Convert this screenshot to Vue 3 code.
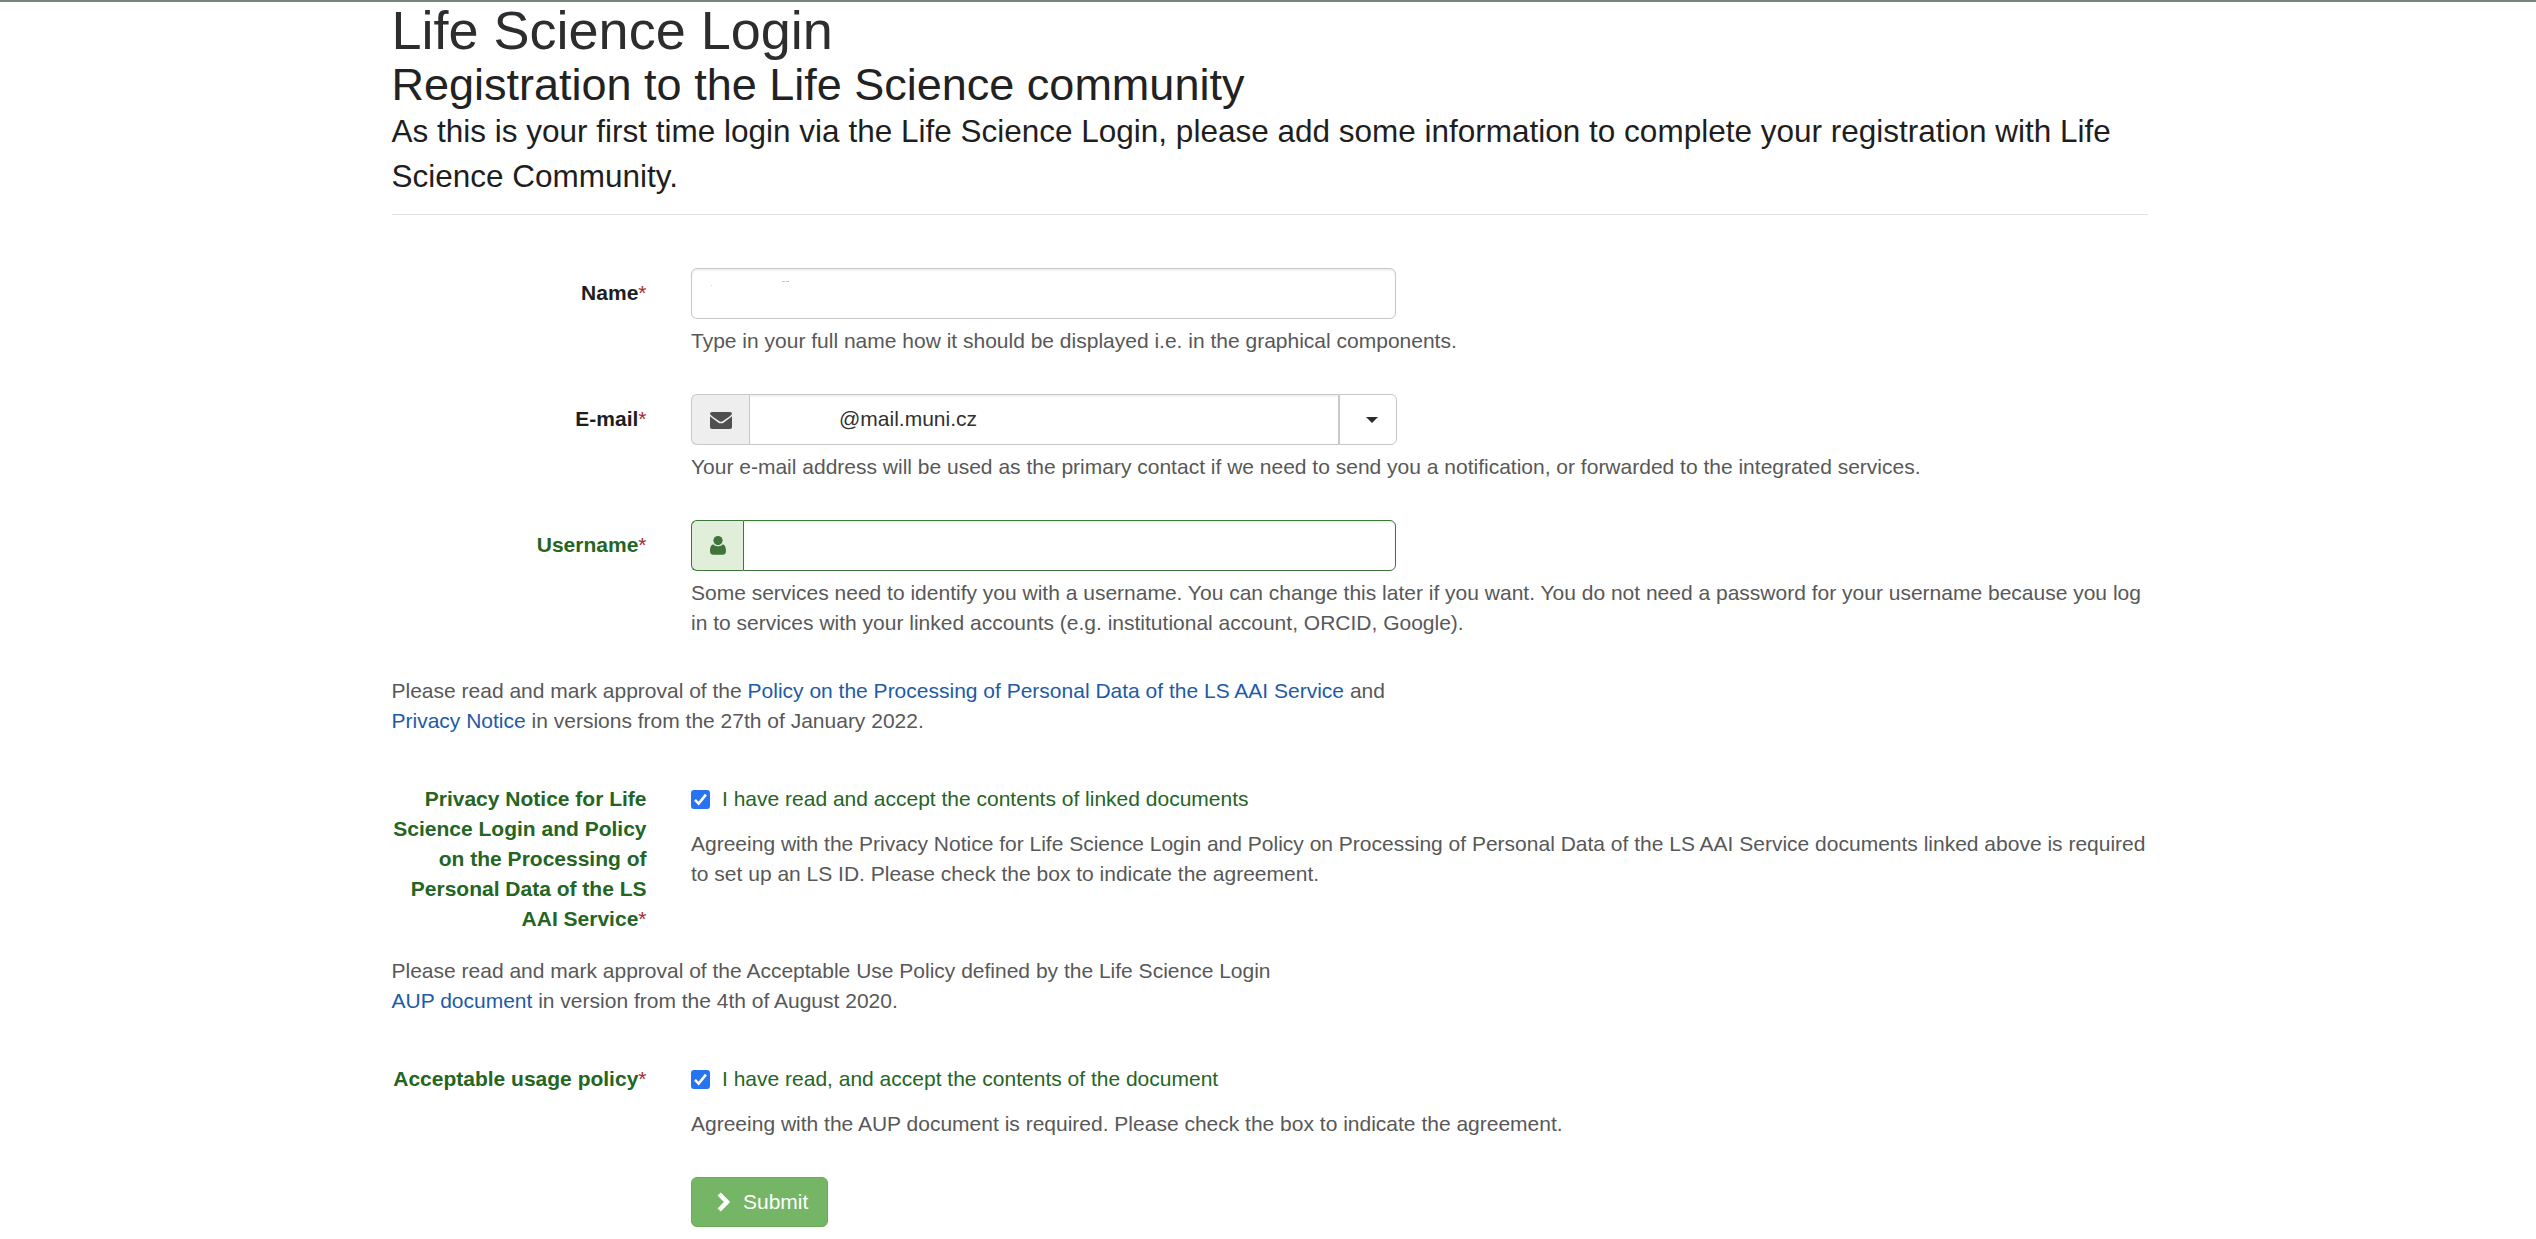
<script setup>
import { ref } from 'vue'

const email = ref('@mail.muni.cz')
const privacyAccepted = ref(true)
const aupAccepted = ref(true)
</script>

<template>
  <div class="page">
    <main class="container">
      <header class="heading">
        <h1>Life Science Login</h1>
        <h2>Registration to the Life Science community</h2>
        <p class="lead">
          As this is your first time login via the Life Science Login, please add some information to complete your registration with Life<br />
          Science Community.
        </p>
      </header>

      <form @submit.prevent>
        <div class="row field">
          <label class="label">Name<span class="req">*</span></label>
          <div class="control">
            <div class="group">
              <div class="input masked"><i class="speck"></i><i class="dash"></i><i class="dash next"></i></div>
            </div>
            <p class="help">Type in your full name how it should be displayed i.e. in the graphical components.</p>
          </div>
        </div>

        <div class="row field">
          <label class="label">E-mail<span class="req">*</span></label>
          <div class="control">
            <div class="group wide">
              <span class="addon mail">
                <svg width="22" height="17" viewBox="0 0 22 17">
                  <rect width="22" height="17" rx="2" fill="currentColor" />
                  <path fill="none" stroke="#eee" stroke-width="1.600" d="M-.5 2.700C1 4.500 3 5.700 8.200 9.500c2.200 1.600 3.400 1.600 5.600 0C19 5.700 21 4.500 22.500 2.700" />
                </svg>
              </span>
              <div class="input middle"><span class="value">{{ email }}</span></div>
              <button class="toggle" type="button" aria-label="Choose e-mail"><i class="caret"></i></button>
            </div>
            <p class="help">Your e-mail address will be used as the primary contact if we need to send you a notification, or forwarded to the integrated services.</p>
          </div>
        </div>

        <div class="row field success">
          <label class="label">Username<span class="req">*</span></label>
          <div class="control">
            <div class="group">
              <span class="addon user">
                <svg width="16" height="19" viewBox="0 0 16 19">
                  <circle cx="8" cy="4.600" r="4.600" fill="currentColor" />
                  <path fill="currentColor" d="M3.600 8.300C1 8.500 0 11.500 0 15.200 0 17.400 1.200 18.700 3.200 18.700h9.600c2 0 3.200-1.300 3.200-3.500 0-3.700-1-6.700-3.600-6.900C11.200 9.500 9.700 10.200 8 10.200S4.800 9.500 3.600 8.300Z" />
                  <path fill="none" stroke="#e0eeda" stroke-width="1" d="M3.300 8.100C4.600 9.300 6.200 9.700 8 9.700s3.400-.4 4.700-1.600" />
                </svg>
              </span>
              <div class="input last"></div>
            </div>
            <p class="help">
              Some services need to identify you with a username. You can change this later if you want. You do not need a password for your username because you log<br />
              in to services with your linked accounts (e.g. institutional account, ORCID, Google).
            </p>
          </div>
        </div>

        <p class="note first">
          Please read and mark approval of the <a>Policy on the Processing of Personal Data of the LS AAI Service</a> and<br />
          <a>Privacy Notice</a> in versions from the 27th of January 2022.
        </p>

        <div class="row agree success">
          <label class="label">Privacy Notice for Life<br />Science Login and Policy<br />on the Processing of<br />Personal Data of the LS<br />AAI Service<span class="req">*</span></label>
          <div class="control">
            <label class="check">
              <span class="box" :class="{ on: privacyAccepted }">
                <svg width="19" height="19" viewBox="0 0 19 19"><path fill="none" stroke="#fff" stroke-width="2.600" d="M4 9.900l3.700 3.700 7.200-9" /></svg>
              </span>
              <span>I have read and accept the contents of linked documents</span>
            </label>
            <p class="help">
              Agreeing with the Privacy Notice for Life Science Login and Policy on Processing of Personal Data of the LS AAI Service documents linked above is required<br />
              to set up an LS ID. Please check the box to indicate the agreement.
            </p>
          </div>
        </div>

        <p class="note second">
          Please read and mark approval of the Acceptable Use Policy defined by the Life Science Login<br />
          <a>AUP document</a> in version from the 4th of August 2020.
        </p>

        <div class="row agree success">
          <label class="label">Acceptable usage policy<span class="req">*</span></label>
          <div class="control">
            <label class="check">
              <span class="box" :class="{ on: aupAccepted }">
                <svg width="19" height="19" viewBox="0 0 19 19"><path fill="none" stroke="#fff" stroke-width="2.600" d="M4 9.900l3.700 3.700 7.200-9" /></svg>
              </span>
              <span>I have read, and accept the contents of the document</span>
            </label>
            <p class="help">Agreeing with the AUP document is required. Please check the box to indicate the agreement.</p>
            <button class="submit" type="submit">
              <svg width="14" height="20" viewBox="0 0 14 20"><path fill="none" stroke="#fff" stroke-width="4.600" d="M2.200 2l7.800 8-7.800 8" /></svg>
              <span>Submit</span>
            </button>
          </div>
        </div>
      </form>
    </main>
  </div>
</template>

<style>
body {
  margin: 0;
  background: #fff;
}
</style>

<style scoped>
* {
  box-sizing: border-box;
}

.page {
  height: 1239px;
  overflow: hidden;
  border-top: 2px solid #74857a;
  font-family: "Liberation Sans", Arial, sans-serif;
  font-size: 21px;
  line-height: 30px;
  color: #1e1e1e;
  white-space: nowrap;
}

.container {
  width: 1756px;
  margin-left: 391.5px;
}

.heading {
  height: 213px;
  border-bottom: 1px solid #e2e2e2;
}

h1,
h2,
p {
  margin: 0;
  font-weight: 400;
}

h1 {
  font-size: 54px;
  line-height: 56px;
  color: #2d2d2d;
}

h2 {
  padding-top: 2px;
  font-size: 45px;
  line-height: 49px;
  color: #222;
}

.lead {
  font-size: 31.5px;
  line-height: 45px;
}

form {
  padding-top: 53px;
}

.row {
  display: grid;
  grid-template-columns: 255px 1fr;
  column-gap: 44.5px;
}

.field {
  min-height: 126px;
}

.label {
  padding-top: 10px;
  text-align: right;
  font-weight: 700;
}

.req {
  color: #a62b22;
  font-weight: 400;
}

.success .label,
.success .check {
  color: #24651f;
}

.group {
  display: flex;
  width: 705px;
  height: 51px;
}

.group.wide {
  width: 706px;
}

.input {
  flex: 1;
  border: 1px solid #c8c8c8;
  border-radius: 6px;
  box-shadow: inset 0 1.500px 1.500px rgba(0, 0, 0, 0.075);
}

.masked {
  display: flex;
  padding: 12px 0 0 19px;
}

.speck {
  width: 1px;
  height: 1px;
  margin-top: 4px;
  background: #dcd9bd;
}

.dash {
  width: 3px;
  height: 1px;
  margin-left: 70px;
  background: #c4c4c4;
}

.dash.next {
  margin-left: 1px;
}

.addon {
  display: flex;
  align-items: center;
  justify-content: center;
  border: 1px solid #c8c8c8;
  border-right: 0;
  border-radius: 6px 0 0 6px;
}

.addon svg {
  display: block;
}

.mail {
  width: 58px;
  background: #eee;
  color: #505050;
}

.mail svg {
  margin-top: 2px;
}

.user {
  width: 52px;
  border-color: #3f753b;
  background: #e0eeda;
  color: #41743c;
}

.input.middle {
  padding: 9px 0 0 89px;
  border-radius: 0;
  color: #303030;
}

.input.last {
  border-color: #3f753b;
  border-radius: 0 6px 6px 0;
}

.toggle {
  display: flex;
  align-items: center;
  justify-content: flex-start;
  width: 58px;
  padding: 0 0 0 26px;
  border: 1px solid #c8c8c8;
  border-radius: 0 6px 6px 0;
  background: #fff;
}

.caret {
  border: 6px solid transparent;
  border-top-color: #2b2b2b;
  border-bottom: 0;
}

.help {
  padding-top: 7px;
  color: #585858;
}

.note {
  color: #585858;
}

.note.first {
  padding-top: 30px;
}

.note.second {
  padding-top: 22px;
}

a {
  color: #1d5ba6;
}

.agree {
  padding-top: 48px;
}

.agree .label {
  padding-top: 0;
}

.check {
  display: flex;
  align-items: center;
  height: 30px;
}

.box {
  width: 19px;
  height: 19px;
  margin: 0 12px 0 0;
  border-radius: 3px;
}

.box.on {
  background: #2874f0;
}

.box svg {
  display: block;
}

.agree .help {
  padding-top: 15px;
}

.submit {
  display: flex;
  align-items: center;
  width: 137px;
  height: 50px;
  margin-top: 38px;
  padding: 0 0 0 25px;
  border: 1px solid #68ab59;
  border-radius: 6px;
  background: #74b566;
  color: #fff;
  font: inherit;
}

.submit svg {
  margin-right: 12px;
}
</style>
